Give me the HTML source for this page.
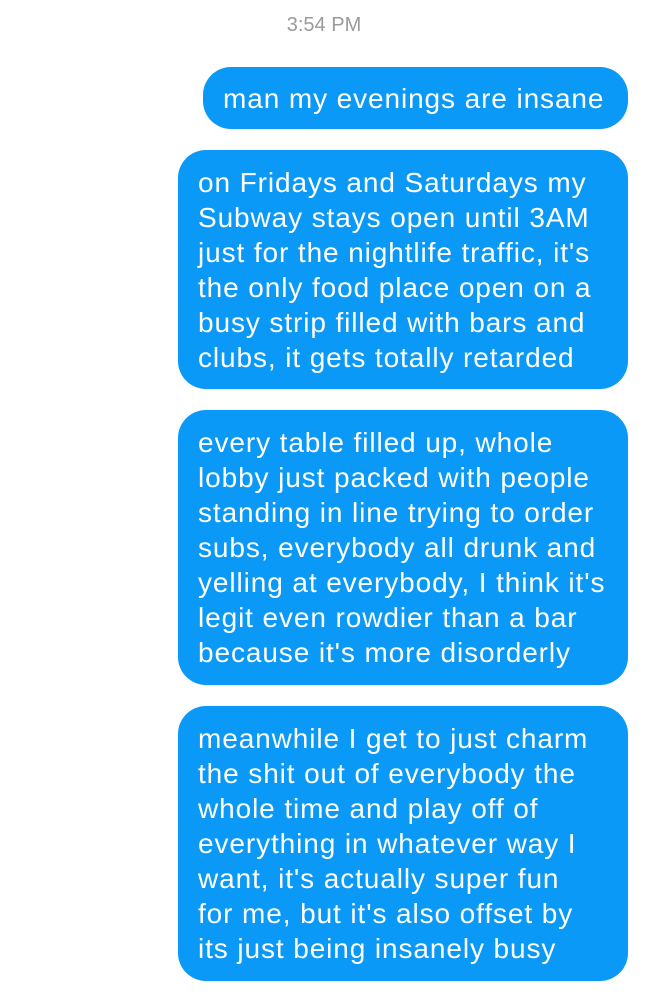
<!DOCTYPE html>
<html><head><meta charset="utf-8"><style>
html,body{margin:0;padding:0;background:#fff;width:648px;height:1004px;overflow:hidden;position:relative}
.t{position:absolute;top:14px;left:0;width:648px;text-align:center;font:20px "Liberation Sans",sans-serif;color:#9a9a9a}
.b{position:absolute;background:#0a99f7;color:#fff;border-radius:28px;font:28px/35px "Liberation Sans",sans-serif;letter-spacing:0.9px;white-space:nowrap;box-sizing:border-box;padding:15px 0 0 20px}
</style></head><body>
<div class="t">3:54 PM</div>
<div class="b" style="left:203px;top:67px;width:425px;height:62px;padding-top:14px;padding-left:20px">man my evenings are insane</div>
<div class="b" style="left:178px;top:150px;width:450px;height:239px">on Fridays and Saturdays my<br>Subway stays open until 3AM<br>just for the nightlife traffic, it's<br>the only food place open on a<br>busy strip filled with bars and<br>clubs, it gets totally retarded</div>
<div class="b" style="left:178px;top:410px;width:450px;height:275px">every table filled up, whole<br>lobby just packed with people<br>standing in line trying to order<br>subs, everybody all drunk and<br>yelling at everybody, I think it's<br>legit even rowdier than a bar<br>because it's more disorderly</div>
<div class="b" style="left:178px;top:706px;width:450px;height:275px">meanwhile I get to just charm<br>the shit out of everybody the<br>whole time and play off of<br>everything in whatever way I<br>want, it's actually super fun<br>for me, but it's also offset by<br>its just being insanely busy</div>
</body></html>
